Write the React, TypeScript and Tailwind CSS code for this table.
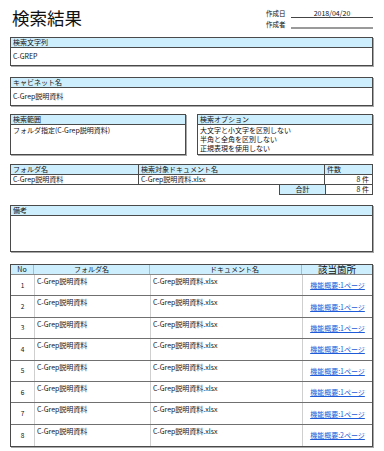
const rows = [
  { no: 1, page: "機能概要:1ページ" },
  { no: 2, page: "機能概要:1ページ" },
  { no: 3, page: "機能概要:1ページ" },
  { no: 4, page: "機能概要:1ページ" },
  { no: 5, page: "機能概要:1ページ" },
  { no: 6, page: "機能概要:1ページ" },
  { no: 7, page: "機能概要:1ページ" },
  { no: 8, page: "機能概要:2ページ" },
];

function Box({
  title,
  children,
  bodyClass,
}: {
  title: string;
  children?: React.ReactNode;
  bodyClass: string;
}) {
  return (
    <div className="border border-[#4a4a4a] shadow-[1px_1px_0_#a8a8a8]">
      <div className="h-[10px] bg-[#cdeefc] border-b border-[#4a4a4a] px-[2px] text-[7px] leading-[9px]">
        {title}
      </div>
      <div className={bodyClass}>{children}</div>
    </div>
  );
}

export default function App() {
  return (
    <div className="w-[384px] h-[451px] overflow-hidden bg-white text-[#111] font-['Noto_Sans_CJK_JP','Noto_Sans',sans-serif]">
      <div className="ml-[10px] w-[363px]">
        {/* title + meta */}
        <div className="flex h-[37px]">
          <div className="ml-[2px] pt-[8px] text-[17.5px] leading-[20px]">検索結果</div>
          <div className="ml-auto mt-[9px] w-[107px] text-[6.5px] leading-[9px]">
            <div className="flex h-[9px] items-end">
              <div className="w-[25px]">作成日</div>
              <div className="flex-1 border-b border-[#444] text-center text-[7px] leading-[8px]">
                2018/04/20
              </div>
            </div>
            <div className="mt-[1px] flex h-[10px] items-end">
              <div className="w-[25px]">作成者</div>
              <div className="h-[6px] flex-1 border-b-2 border-[#9a9a9a]" />
            </div>
          </div>
        </div>

        <Box title="検索文字列" bodyClass="h-[17px] flex items-center px-[2px] text-[7px]">
          C-GREP
        </Box>

        <div className="mt-[11px]">
          <Box title="キャビネット名" bodyClass="h-[17px] flex items-center px-[2px] text-[7px]">
            C-Grep説明資料
          </Box>
        </div>

        <div className="mt-[8px] grid grid-cols-2 gap-[11px]">
          <Box title="検索範囲" bodyClass="h-[29px] px-[2px] pt-[1px] text-[7px] leading-[9px]">
            フォルダ指定(C-Grep説明資料)
          </Box>
          <Box title="検索オプション" bodyClass="h-[29px] px-[2px] pt-[1px] text-[7px] leading-[9px]">
            <div>大文字と小文字を区別しない</div>
            <div>半角と全角を区別しない</div>
            <div>正規表現を使用しない</div>
          </Box>
        </div>

        {/* folder / document summary */}
        <div className="mt-[9px] text-[7px] leading-[9px]">
          <div className="flex h-[11px] border border-[#4a4a4a] bg-[#cdeefc]">
            <div className="w-[128px] border-r border-[#4a4a4a] px-[2px]">フォルダ名</div>
            <div className="w-[186px] border-r border-[#4a4a4a] px-[2px]">検索対象ドキュメント名</div>
            <div className="flex-1 px-[2px]">件数</div>
          </div>
          <div className="flex h-[10px] border-x border-b border-[#4a4a4a]">
            <div className="w-[128px] border-r border-[#4a4a4a] px-[2px]">C-Grep説明資料</div>
            <div className="w-[186px] border-r border-[#4a4a4a] px-[2px]">C-Grep説明資料.xlsx</div>
            <div className="flex-1 pr-[3px] text-right text-[#111]">8 件</div>
          </div>
          <div className="flex h-[10px]">
            <div className="w-[269px]" />
            <div className="w-[46px] border-l border-b border-[#4a4a4a] bg-[#cdeefc] text-center">合計</div>
            <div className="flex-1 border-x border-b border-[#4a4a4a] pr-[3px] text-right text-[#111]">8 件</div>
          </div>
        </div>

        <div className="mt-[10px]">
          <Box title="備考" bodyClass="h-[35px]" />
        </div>

        {/* hit list */}
        <div className="mt-[12px] border border-[#4a4a4a] shadow-[1px_1px_0_#a8a8a8]">
          <div className="flex h-[10px] border-b border-[#888] text-[7px] leading-[9px]">
            <div className="w-[23px] border-r border-[#b8b8b8] bg-[#cdeefc] text-center">No</div>
            <div className="w-[116px] border-r border-[#b8b8b8] bg-[#cdeefc] text-center">フォルダ名</div>
            <div className="w-[152px] border-r border-[#b8b8b8] bg-[#cdeefc] pl-[18px] text-center">ドキュメント名</div>
            <div className="flex-1 bg-[#cdeefc] text-center text-[9.5px] leading-[9px]">該当箇所</div>
          </div>
          {rows.map((r, i) => (
            <div
              key={r.no}
              className={`flex h-[21.4px] text-[7px] leading-[9px] ${
                i < rows.length - 1 ? "border-b border-[#707070]" : ""
              }`}
            >
              <div className="flex w-[23px] items-center justify-center text-[6.5px]">{r.no}</div>
              <div className="w-[116px] border-l border-[#cfcfcf] px-[2px] pt-[2px]">C-Grep説明資料</div>
              <div className="w-[152px] border-l border-[#cfcfcf] px-[2px] pt-[2px]">C-Grep説明資料.xlsx</div>
              <div className="flex flex-1 items-center justify-center border-l border-[#cfcfcf] pt-[1px]">
                <span className="text-[#1d5bd8] underline">{r.page}</span>
              </div>
            </div>
          ))}
        </div>
      </div>
    </div>
  );
}
